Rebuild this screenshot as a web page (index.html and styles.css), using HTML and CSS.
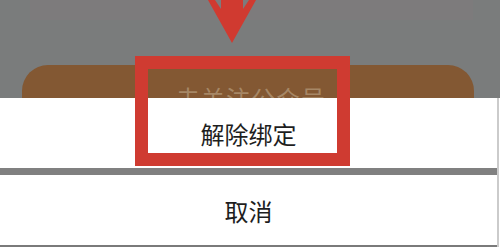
FILE: index.html
```html
<!DOCTYPE html>
<html lang="zh-CN">
<head>
<meta charset="utf-8">
<title>解除绑定</title>
<link rel="stylesheet" href="styles.css">
</head>
<body>
<div class="screen">
  <div class="backdrop">
    <div class="bg-card"></div>
    <div class="follow-btn"><span class="follow-text">去关注公众号</span></div>
  </div>
  <div class="sheet">
    <div class="sheet-item">解除绑定</div>
    <div class="sheet-gap"></div>
    <div class="sheet-item sheet-last">取消</div>
  </div>
  <svg class="arrow" width="500" height="50" viewBox="0 0 500 50" aria-hidden="true">
    <polygon points="208,0 215,0 221,9 221,0 243,0 243,9 249,0 256,0 232,43" fill="#d03a30"/>
  </svg>
  <div class="highlight"></div>
</div>
</body>
</html>
```

FILE: styles.css
```css
* { box-sizing: border-box; }
html, body { margin: 0; padding: 0; background: #ffffff; }
body { font-family: "Noto Sans CJK SC", "Noto Sans", sans-serif; }

.screen {
  position: relative;
  width: 500px;
  height: 247px;
  overflow: hidden;
  background: #ffffff;
}

.backdrop {
  position: relative;
  height: 98px;
  overflow: hidden;
  background: #7a7c7c;
  padding: 65px 26px 0 22px;
}

.bg-card {
  position: absolute;
  left: 30px;
  top: 0;
  width: 443px;
  height: 20px;
  background: #7d7b7c;
}

.follow-btn {
  position: relative;
  height: 64px;
  border-radius: 26px;
  background: #835833;
  display: flex;
  justify-content: center;
  padding-top: 21px;
}

.follow-text {
  font-size: 24px;
  line-height: 24px;
  letter-spacing: 1px;
  color: #a68766;
  padding-left: 6px;
}

.sheet {
  display: flex;
  flex-direction: column;
  border-right: 2px solid #cbcbcb;
  margin-right: 1px;
}

.sheet-item {
  height: 70px;
  display: flex;
  align-items: center;
  justify-content: center;
  font-size: 24px;
  color: #1e1e1e;
  background: #ffffff;
}

.sheet-gap {
  height: 7px;
  background: #808080;
}

.sheet-last {
  border-bottom: 2px solid #7a7a7a;
  height: 72px;
  padding-top: 0;
}

.arrow {
  position: absolute;
  left: 0;
  top: 0;
}

.highlight {
  position: absolute;
  left: 135px;
  top: 56px;
  width: 215px;
  height: 110px;
  border: 13px solid #cf3b31;
}
```
